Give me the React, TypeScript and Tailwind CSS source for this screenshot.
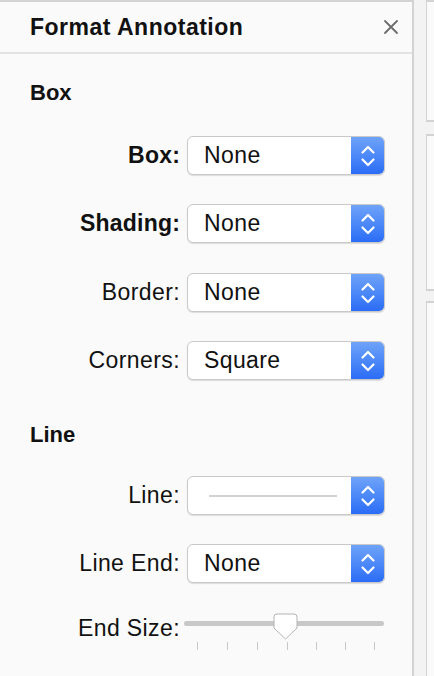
import React from 'react';

const font = { fontFamily: '"Liberation Sans", Arial, sans-serif' };

const Chevrons = () => (
    <svg width="16" height="24" viewBox="0 0 16 24" fill="none" stroke="white" strokeWidth="2.2" strokeLinecap="round" strokeLinejoin="round">
        <path d="M2.5 8.5 L8 3 L13.5 8.5" />
        <path d="M2.5 15.5 L8 21 L13.5 15.5" />
    </svg>
);

const Select: React.FC<{ children: React.ReactNode }> = ({ children }) => (
    <div className="flex h-[39px] w-[198px] rounded-[6px] border border-[#c9c9c9] bg-white shadow-[0_1px_1px_rgba(0,0,0,0.12)] overflow-hidden">
        <div className="flex flex-1 items-center pl-[16px] text-[23px] tracking-[0.4px] text-[#111]">{children}</div>
        <div className="flex w-[33px] items-center justify-center bg-gradient-to-b from-[#6fa3f8] to-[#2a6cf6]">
            <Chevrons />
        </div>
    </div>
);

const Row: React.FC<{ label: string; bold?: boolean; className?: string; children: React.ReactNode }> = ({ label, bold, className, children }) => (
    <div className={`flex items-center ${className ?? ''}`}>
        <div className={`w-[180px] text-right text-[23px] text-[#111] ${bold ? 'font-bold tracking-[0.2px]' : 'tracking-[0.4px]'}`}>
            {label}
        </div>
        <div className="ml-[7px]">{children}</div>
    </div>
);

const Slider = () => {
    const ticks = [197, 227, 257, 287, 316, 345, 374];
    return (
        <div className="relative -ml-[3px] h-[40px] w-[200px]">
            <div className="absolute left-0 right-0 top-[13px] h-[5px] rounded-full bg-[#c8c8c8]" />
            {ticks.map((x) => (
                <div key={x} className="absolute top-[34px] h-[8px] w-px bg-[#c8c8c8]" style={{ left: x - 184 }} />
            ))}
            <svg className="absolute left-[89px] top-[5px]" width="25" height="27" viewBox="0 0 25 27">
                <path d="M4 1 H21 Q24 1 24 4 V15 L12.5 26 L1 15 V4 Q1 1 4 1 Z" fill="white" stroke="#b4b4b4" strokeWidth="1" />
            </svg>
        </div>
    );
};

export default function App() {
    return (
        <div className="flex h-[676px] w-[434px] bg-[#f3f3f3] overflow-hidden" style={font}>
            <div className="flex w-[414px] shrink-0 flex-col border-t-2 border-r-2 border-[#d3d3d3] bg-[#fafafa]">
                <div className="flex h-[52px] shrink-0 items-center justify-between border-b-2 border-[#e3e3e3] pl-[30px] pr-[13px]">
                    <span className="text-[23px] font-bold tracking-[0.5px] text-[#111]">Format Annotation</span>
                    <svg width="16" height="16" viewBox="0 0 16 16" stroke="#6b6b6b" strokeWidth="1.8" strokeLinecap="round">
                        <path d="M2 2 L14 14 M14 2 L2 14" />
                    </svg>
                </div>

                <div className="flex flex-col">
                    <div className="mt-[28px] pl-[30px] text-[22px] font-bold leading-[22px] text-[#111]">Box</div>
                    <Row label="Box:" bold className="mt-[32px]">
                        <Select>None</Select>
                    </Row>
                    <Row label="Shading:" bold className="mt-[29px]">
                        <Select>None</Select>
                    </Row>
                    <Row label="Border:" className="mt-[30px]">
                        <Select>None</Select>
                    </Row>
                    <Row label="Corners:" className="mt-[29px]">
                        <Select>Square</Select>
                    </Row>

                    <div className="mt-[44px] pl-[30px] text-[22px] font-bold leading-[22px] text-[#111]">Line</div>
                    <Row label="Line:" className="mt-[30px]">
                        <Select>
                            <div className="ml-[5px] h-[2px] w-[128px] bg-[#d2d2d2]" />
                        </Select>
                    </Row>
                    <Row label="Line End:" className="mt-[29px]">
                        <Select>None</Select>
                    </Row>
                    <Row label="End Size:" className="mt-[25px]">
                        <Slider />
                    </Row>
                </div>
            </div>

            <div className="ml-[12px] flex w-[30px] shrink-0 flex-col">
                <div className="h-[122px] border-t-2 border-b-2 border-l border-[#d3d3d3] bg-[#fafafa]" />
                <div className="mt-[12px] h-[157px] border-t-2 border-b-2 border-l border-[#d3d3d3] bg-[#fafafa]" />
                <div className="mt-[10px] flex-1 border-t-2 border-l border-[#d3d3d3] bg-[#fafafa]" />
            </div>
        </div>
    );
}
